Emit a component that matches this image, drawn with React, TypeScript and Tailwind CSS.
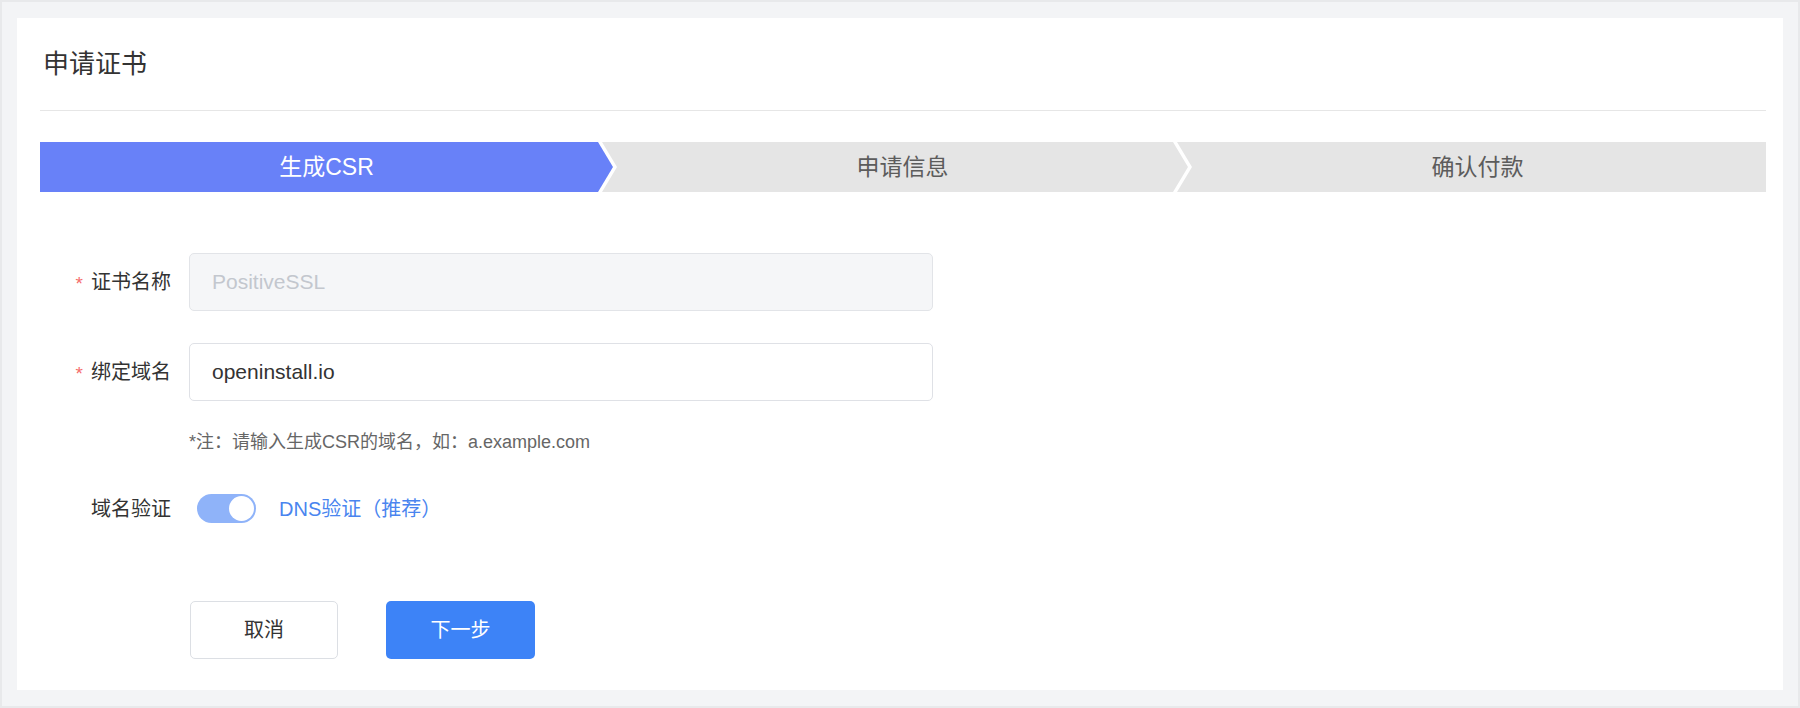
import React from 'react';

const steps = [
  { label: '生成CSR', active: true },
  { label: '申请信息', active: false },
  { label: '确认付款', active: false },
];

const FormLabel: React.FC<{ text: string; required?: boolean }> = ({ text, required }) => (
  <div className="w-[131px] mr-[18px] shrink-0 flex items-center justify-end text-[20px] text-[#333] leading-none">
    {required && <span className="text-[#f56c6c] text-[19px] mr-[8px] mt-[3px]">*</span>}
    {text}
  </div>
);

const App: React.FC = () => {
  return (
    <div className="h-[708px] w-full bg-[#f3f4f6] border-2 border-[#e8e9eb] px-[15px] pt-[16px] [font-family:'Liberation_Sans','Noto_Sans_CJK_SC',sans-serif]">
      <div className="bg-white h-[672px] pl-[23px] pr-[17px]">
        {/* Header */}
        <div className="h-[93px] flex items-center border-b border-[#e6e6e6]">
          <h1 className="text-[26px] text-[#333] font-normal pl-[3px]">申请证书</h1>
        </div>

        {/* Steps */}
        <div className="flex mt-[31px] h-[50px]">
          <div className="w-[573px] bg-[#6881f8] text-white flex items-center justify-center text-[23px] [clip-path:polygon(0_0,calc(100%_-_15px)_0,100%_50%,calc(100%_-_15px)_100%,0_100%)]">
            {steps[0].label}
          </div>
          <div className="w-[586px] ml-[-11px] bg-[#e5e5e5] text-[#5c5c5c] flex items-center justify-center text-[23px] pl-[15px] [clip-path:polygon(0_0,calc(100%_-_15px)_0,100%_50%,calc(100%_-_15px)_100%,0_100%,15px_50%)]">
            {steps[1].label}
          </div>
          <div className="flex-1 ml-[-11px] bg-[#e5e5e5] text-[#5c5c5c] flex items-center justify-center text-[23px] pl-[12px] [clip-path:polygon(0_0,100%_0,100%_100%,0_100%,15px_50%)]">
            {steps[2].label}
          </div>
        </div>

        {/* Form */}
        <div className="mt-[61px]">
          <div className="flex items-center h-[58px]">
            <FormLabel text="证书名称" required />
            <input
              disabled
              placeholder="PositiveSSL"
              className="w-[744px] h-[58px] px-[22px] rounded-[5px] border border-[#e2e4e8] bg-[#f5f6f8] text-[21px] placeholder:text-[#c3c7ce] outline-none"
            />
          </div>

          <div className="flex items-center h-[58px] mt-[32px]">
            <FormLabel text="绑定域名" required />
            <input
              defaultValue="openinstall.io"
              className="w-[744px] h-[58px] px-[22px] rounded-[5px] border border-[#dfe1e6] bg-white text-[21px] text-[#333] outline-none"
            />
          </div>

          <p className="ml-[149px] mt-[29px] text-[18px] leading-[24px] text-[#666]">
            *注：请输入生成CSR的域名，如：a.example.com
          </p>

          <div className="flex items-center h-[29px] mt-[40px]">
            <FormLabel text="域名验证" />
            <div className="ml-[8px] w-[59px] h-[29px] rounded-full bg-[#8fb3f9] flex items-center justify-end p-[2px]">
              <div className="w-[25px] h-[25px] rounded-full bg-white" />
            </div>
            <span className="ml-[23px] text-[20px] text-[#4a85ef]">DNS验证（推荐）</span>
          </div>

          <div className="flex items-center gap-[48px] ml-[150px] mt-[78px]">
            <button className="w-[148px] h-[58px] rounded-[5px] border border-[#dcdfe4] bg-white text-[20px] text-[#333]">
              取消
            </button>
            <button className="w-[149px] h-[58px] rounded-[5px] bg-[#3d83f7] text-[20px] text-white">
              下一步
            </button>
          </div>
        </div>
      </div>
    </div>
  );
};

export default App;
